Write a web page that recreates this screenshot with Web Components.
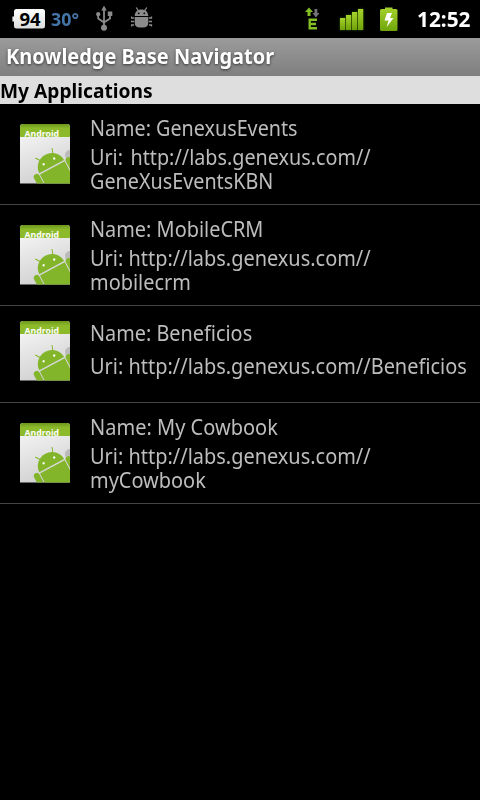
<!DOCTYPE html>
<html lang="en">
<head>
<meta charset="utf-8">
<title>Knowledge Base Navigator</title>
<style>
html,body{margin:0;background:#000}
body{width:480px;height:800px;overflow:hidden;font-family:"Noto Sans","Open Sans",sans-serif}
</style>
</head>
<body>
<kb-screen></kb-screen>
<script>
const shadow = (el, html) => {
  const t = document.createElement('template');
  t.innerHTML = html;
  const root = el.attachShadow({mode: 'open'});
  root.append(t.content.cloneNode(true));
  return root;
};

/* Text whose widest line is condensed to a given width. */
customElements.define('fit-line', class extends HTMLElement {
  connectedCallback() {
    const root = shadow(this, `<style>
      :host{display:block;white-space:pre;width:${this.getAttribute('w')}px}
      span{display:inline-block;transform-origin:0 50%}
    </style><span><slot></slot></span>`);
    const s = root.querySelector('span');
    s.style.transform = `scaleX(${this.getAttribute('w') / s.offsetWidth})`;
  }
});

customElements.define('status-bar', class extends HTMLElement {
  connectedCallback() {
    shadow(this, `<style>
      :host{display:flex;justify-content:space-between;height:38px;background:#000;box-sizing:border-box;padding:0 9.500px 0 12px;font-weight:700;line-height:38px}
      .g{display:flex;align-items:center}
      svg{display:block;flex:none}
      .b{position:relative;width:33px;height:20px;display:flex;justify-content:center}
      .b svg{position:absolute;left:0;top:0}
      .b fit-line{position:relative;margin-left:3px;font-size:18.5px;line-height:20px;color:#000}
      .t{margin-left:6px;font-size:17.500px;color:#4475a9}
      .c{margin-left:20px;font-size:21px;color:#fff}
    </style>
    <div class="g">
      <div class="b"><svg width="33" height="20" viewBox="0 0 33 20"><defs><linearGradient id="w" x2="0" y2="1"><stop stop-color="#fff"/><stop offset="1" stop-color="#ddd"/></linearGradient></defs><path d="M4.500 0h26q2.500 0 2.500 2.500v14.500q0 2.500-2.500 2.500h-26Q2 19.500 2 17v-4.500H.4v-5H2v-5Q2 0 4.500 0z" fill="url(#w)"/></svg><fit-line w="21">94</fit-line></div>
      <fit-line class="t" w="27.500">30°</fit-line>
      <svg style="margin-left:17px" width="18" height="26" viewBox="0 0 18 26" fill="none" stroke="#8b8b8b" stroke-width="1.8"><path d="M8 4v17M2.200 9v3.500L8 16.500M14 9v3.500L8 16.500"/><g fill="#8b8b8b" stroke="none"><path d="M8-.5l2.700 5H5.300z"/><rect x="11.800" y="5.500" width="4.500" height="4.500"/><circle cx="2.200" cy="8.200" r="2.100"/><circle cx="8" cy="21.800" r="3"/></g></svg>
      <svg style="margin:-2px 0 0 17px" width="22" height="22" viewBox="0 0 22 22" fill="#8b8b8b"><path d="M3.700 9C4 4.500 6.800 2.500 10.500 2.500S17 4.500 17.300 9zM3.700 10h13.600v5.500q0 5-5.300 5H9q-5.300 0-5.300-5z"/><path d="M5.200.5l2.300 3.300M15.800.5l-2.300 3.300M.5 9.500V11h2.600M0 14.500h3.100M3.100 18H.5v1.500M20.500 9.500V11h-2.600M21 14.500h-3.100M17.900 18h2.600v1.500" fill="none" stroke="#8b8b8b" stroke-width="1.300"/><circle cx="7.700" cy="6.300" r=".9" fill="#000"/><circle cx="13.300" cy="6.300" r=".9" fill="#000"/></svg>
    </div>
    <div class="g">
      <svg width="15" height="24" viewBox="0 0 15 24"><path d="M4 .5L8 5H5.500v4h-3V5H0z" fill="#84bd25"/><path d="M9.500 2h2.800v4h2.200l-3.600 4.500L7.500 6h2z" fill="#77737b"/><path d="M3.500 12.700H12M3.500 17h7.500M3.500 21.300H12M4.700 11.500v11" stroke="#84bd25" stroke-width="2.400" fill="none"/></svg>
      <svg style="margin:2px 0 0 20px;filter:drop-shadow(0 0 1px #355c00)" width="24" height="22" viewBox="0 0 24 22"><defs><linearGradient id="s" x2="0" y2="1"><stop stop-color="#a5d22c"/><stop offset="1" stop-color="#70a30b"/></linearGradient></defs><g fill="url(#s)"><rect y="9" width="5.200" height="12"/><rect x="6" y="6" width="5.200" height="15"/><rect x="12" y="3" width="5.200" height="18"/><rect x="18" width="5.200" height="21"/></g></svg>
      <svg style="margin-left:16px" width="18" height="25" viewBox="0 0 18 25"><defs><linearGradient id="v" x2="0" y2="1"><stop stop-color="#a6d22d"/><stop offset="1" stop-color="#6fa50b"/></linearGradient></defs><path d="M1.500 2H5V.5h7.500V2H16q1.500 0 1.500 1.500v19q0 1.500-1.500 1.500H1.500Q0 24 0 22.500v-19Q0 2 1.500 2z" fill="url(#v)"/><path d="M7 6h5l-2 5h3.500L6.700 20l1.800-6.500H4.500z" fill="#fff"/></svg>
      <fit-line class="c" style="margin-left:19px" w="53.500">12:52</fit-line>
    </div>`);
  }
});

customElements.define('title-bar', class extends HTMLElement {
  connectedCallback() {
    shadow(this, `<style>
      :host{display:block;box-sizing:border-box;height:38px;padding-left:5.500px;background:linear-gradient(#9b9b9b,#7f7f7f);color:#fff;font-weight:700;font-size:21px;line-height:36px;text-shadow:0 1px 3px #333}
    </style><fit-line w="268">Knowledge Base Navigator</fit-line>`);
  }
});

customElements.define('section-header', class extends HTMLElement {
  connectedCallback() {
    shadow(this, `<style>
      :host{display:block;height:28px;background:#dedede;color:#000;font-weight:700;font-size:19.500px;line-height:29px}
    </style><fit-line w="152.500">My Applications</fit-line>`);
  }
});

customElements.define('app-icon', class extends HTMLElement {
  connectedCallback() {
    shadow(this, `<style>
      :host{display:block;width:50px;height:60px;flex:none}svg{display:block}
      text{font:700 9.300px "Noto Sans",sans-serif;fill:#fff}
    </style>
    <svg width="50" height="60" viewBox="0 0 50 60">
      <defs><linearGradient id="p" x2=".3" y2="1"><stop stop-color="#fafafa"/><stop offset="1" stop-color="#d2d2d2"/></linearGradient>
      <linearGradient id="h" x2="0" y2="1"><stop stop-color="#6c961d"/><stop offset=".35" stop-color="#8dba2b"/></linearGradient>
      <clipPath id="k"><path d="M3 0h44q3 0 3 3v56.500H0V3q0-3 3-3z"/></clipPath>
      <clipPath id="c"><rect width="50" height="12.800"/></clipPath></defs>
      <g clip-path="url(#k)">
        <rect width="50" height="60" fill="url(#p)"/>
        <rect width="50" height="13" fill="url(#h)"/>
        <g clip-path="url(#c)"><text x="4.500" y="13.400" textLength="34.500" lengthAdjust="spacingAndGlyphs">Android</text></g>
        <circle cx="50" cy="31" r="5" fill="#bbb"/>
        <g transform="translate(32 43.200) rotate(-28)" fill="#83b52b">
          <path d="M-14-.7a14 13.500 0 0 1 28 0z"/>
          <path d="M-14 .7h28v30h-28z"/>
          <rect x="-21" y="-1.500" width="6" height="26" rx="3"/>
          <rect x="15" y="-1.500" width="6" height="26" rx="3"/>
          <path d="M-7-11l-3.400-5M7-11l2-6" stroke="#83b52b" stroke-width="1" fill="none"/>
          <circle cx="-6" cy="-6.600" r="1.200" fill="#fff"/><circle cx="6" cy="-6.600" r="1.200" fill="#fff"/>
        </g>
      </g>
    </svg>`);
  }
});

customElements.define('app-row', class extends HTMLElement {
  connectedCallback() {
    shadow(this, `<style>
      :host{display:flex;align-items:flex-start;gap:20px;box-sizing:border-box;height:101px;padding:20px 0 0 20px;border-bottom:1px solid #434343;color:#bdbdbd;font-size:21.500px;line-height:24px}
      :host([compact]){height:97px;padding-top:15px}
      .x{display:flex;flex-direction:column;gap:5px;margin-top:-8px}
      :host([compact]) .x{gap:9px;margin-top:0}
    </style><app-icon></app-icon><div class="x"><slot name="name"></slot><slot name="uri"></slot></div>`);
  }
});

customElements.define('kb-screen', class extends HTMLElement {
  connectedCallback() {
    shadow(this, `<style>:host{display:flex;flex-direction:column;width:480px;height:800px;background:#000}.wide{word-spacing:2.500px}</style>
    <status-bar></status-bar>
    <title-bar></title-bar>
    <section-header></section-header>
    <app-row><fit-line slot="name" w="207.500">Name: GenexusEvents</fit-line><fit-line slot="uri" class="wide" w="280.500">Uri: http://labs.genexus.com//
GeneXusEventsKBN</fit-line></app-row>
    <app-row><fit-line slot="name" w="173">Name: MobileCRM</fit-line><fit-line slot="uri" w="281">Uri: http://labs.genexus.com//
mobilecrm</fit-line></app-row>
    <app-row compact><fit-line slot="name" w="162.500">Name: Beneficios</fit-line><fit-line slot="uri" w="376.500">Uri: http://labs.genexus.com//Beneficios</fit-line></app-row>
    <app-row><fit-line slot="name" w="188">Name: My Cowbook</fit-line><fit-line slot="uri" w="281">Uri: http://labs.genexus.com//
myCowbook</fit-line></app-row>`);
  }
});
</script>
</body>
</html>
